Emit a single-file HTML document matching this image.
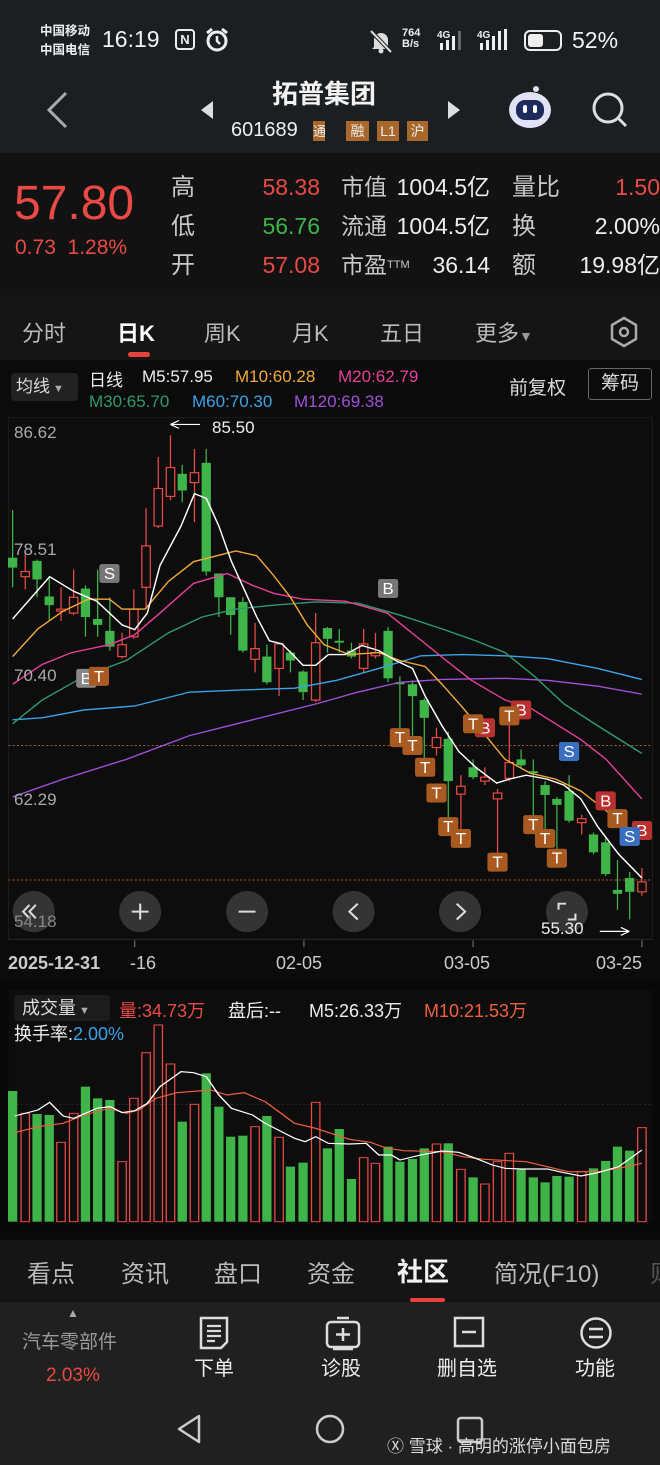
<!DOCTYPE html>
<html><head><meta charset="utf-8"><style>
*{margin:0;padding:0;box-sizing:border-box}
body{width:660px;height:1465px;background:#0b0b0b;font-family:"Liberation Sans","Noto Sans CJK SC",sans-serif;position:relative;overflow:hidden;color:#ddd}
.a{position:absolute;white-space:nowrap}
.r{color:#ea4a45}.g{color:#3fb449}
</style></head><body>
<!-- header bg -->
<div class="a" style="left:0;top:0;width:660px;height:153px;background:#1c1f22"></div>
<div class="a" style="left:0;top:153px;width:660px;height:142px;background:#121212"></div>
<div class="a" style="left:0;top:295px;width:660px;height:65px;background:#151515"></div>
<!-- status -->
<div class="a" style="left:40px;top:22px;font-size:12.5px;font-weight:bold;color:#eee;line-height:19px">中国移动<br>中国电信</div>
<div class="a" style="left:102px;top:26px;font-size:23px;color:#f2f2f2">16:19</div>
<div class="a" style="left:175px;top:29px;width:20px;height:21px;border:2px solid #eee;border-radius:4px;font-size:13px;font-weight:bold;text-align:center;line-height:17px;color:#eee">N</div>
<svg class="a" style="left:204px;top:27px" width="26" height="26"><circle cx="13" cy="14" r="9" stroke="#eee" stroke-width="3" fill="none"/><path d="M13 9 V14 L16 17" stroke="#eee" stroke-width="2.5" fill="none"/><path d="M3 6 L8 2 M23 6 L18 2" stroke="#eee" stroke-width="3"/></svg>
<svg class="a" style="left:368px;top:28px" width="26" height="26"><path d="M6 19 V12 A7 7 0 0 1 20 12 V19 L22 21 H4Z" fill="#ddd"/><circle cx="13" cy="23" r="2.5" fill="#ddd"/><path d="M3 3 L23 24" stroke="#1c1f22" stroke-width="4"/><path d="M3 3 L23 24" stroke="#ddd" stroke-width="2"/></svg>
<div class="a" style="left:402px;top:28px;font-size:11px;font-weight:bold;line-height:11px;color:#eee">764<br>B/s</div>
<svg class="a" style="left:437px;top:28px" width="36" height="24"><text x="0" y="10" font-size="10" font-weight="bold" fill="#eee" font-family="Liberation Sans">4G</text><rect x="3" y="15" width="3" height="7" fill="#eee"/><rect x="9" y="12" width="3" height="10" fill="#eee"/><rect x="15" y="8" width="3" height="14" fill="#eee"/><rect x="21" y="3" width="3" height="19" fill="#666"/></svg>
<svg class="a" style="left:477px;top:28px" width="36" height="24"><text x="0" y="10" font-size="10" font-weight="bold" fill="#eee" font-family="Liberation Sans">4G</text><rect x="3" y="15" width="3" height="7" fill="#eee"/><rect x="9" y="12" width="3" height="10" fill="#eee"/><rect x="15" y="8" width="3" height="14" fill="#eee"/><rect x="21" y="3" width="3" height="19" fill="#eee"/><rect x="27" y="1" width="3" height="21" fill="#eee"/></svg>
<div class="a" style="left:524px;top:30px;width:38px;height:21px;border:2px solid #eee;border-radius:6px"><div style="margin:2px;width:15px;height:13px;background:#eee;border-radius:3px"></div></div>
<div class="a" style="left:572px;top:27px;font-size:23px;color:#f2f2f2">52%</div>
<!-- nav header -->
<svg class="a" style="left:44px;top:90px" width="26" height="40"><path d="M22 3 L5 20 L22 37" stroke="#aaa" stroke-width="3" fill="none"/></svg>
<svg class="a" style="left:199px;top:99px" width="16" height="22"><path d="M14 2 L2 11 L14 20Z" fill="#ddd"/></svg>
<svg class="a" style="left:446px;top:99px" width="16" height="22"><path d="M2 2 L14 11 L2 20Z" fill="#ddd"/></svg>
<div class="a" style="left:272px;top:74px;font-size:26px;font-weight:bold;color:#f2f2f2">拓普集团</div>
<div class="a" style="left:231px;top:119px;font-size:20px;color:#eee">601689</div>
<div class="a" style="left:313px;top:121px;width:12px;height:20px;background:#a8682c;font-size:13px;color:#eee;overflow:hidden">通</div>
<div class="a" style="left:346px;top:121px;width:23px;height:20px;background:#a8682c;font-size:14px;color:#eee;text-align:center;line-height:20px">融</div>
<div class="a" style="left:377px;top:121px;width:22px;height:20px;background:#a8682c;font-size:14px;color:#eee;text-align:center;line-height:20px">L1</div>
<div class="a" style="left:407px;top:121px;width:21px;height:20px;background:#a8682c;font-size:14px;color:#eee;text-align:center;line-height:20px;overflow:hidden">沪</div>
<svg class="a" style="left:505px;top:84px" width="52" height="48"><ellipse cx="25" cy="26" rx="21" ry="18" fill="#dfe3f5"/><rect x="11" y="16" width="28" height="20" rx="9" fill="#1d2a5c"/><rect x="18" y="21" width="4" height="8" rx="2" fill="#fff"/><rect x="28" y="21" width="4" height="8" rx="2" fill="#fff"/><circle cx="31" cy="5" r="3" fill="#dfe3f5"/></svg>
<svg class="a" style="left:590px;top:90px" width="40" height="40"><circle cx="18" cy="18" r="14" stroke="#ddd" stroke-width="3" fill="none"/><path d="M28 28 L36 36" stroke="#ddd" stroke-width="3"/></svg>
<!-- price block -->
<div class="a r" style="left:14px;top:178px;font-size:48px;line-height:52px">57.80</div>
<div class="a r" style="left:15px;top:236px;font-size:21px">0.73&nbsp;&nbsp;1.28%</div>
<div class="a" style="left:171px;top:168px;font-size:24px;line-height:39px;color:#c8c8c8">高<br>低<br>开</div>
<div class="a" style="left:240px;top:168px;width:80px;text-align:right;font-size:23px;line-height:39px"><span class="r">58.38</span><br><span class="g">56.76</span><br><span class="r">57.08</span></div>
<div class="a" style="left:341px;top:168px;font-size:23px;line-height:39px;color:#c8c8c8">市值<br>流通<br>市盈<span style="font-size:11px;vertical-align:top">TTM</span></div>
<div class="a" style="left:380px;top:168px;width:110px;text-align:right;font-size:23px;line-height:39px;color:#eee">1004.5亿<br>1004.5亿<br>36.14</div>
<div class="a" style="left:512px;top:168px;font-size:24px;line-height:39px;color:#c8c8c8">量比<br>换<br>额</div>
<div class="a" style="left:540px;top:168px;width:120px;text-align:right;font-size:23px;line-height:39px;color:#eee"><span class="r">1.50</span><br>2.00%<br>19.98亿</div>
<!-- tabs -->
<div class="a" style="left:22px;top:316px;font-size:22px;color:#bbb">分时</div>
<div class="a" style="left:117px;top:316px;font-size:22px;color:#fff;font-weight:bold">日K</div>
<div class="a" style="left:204px;top:316px;font-size:22px;color:#bbb">周K</div>
<div class="a" style="left:292px;top:316px;font-size:22px;color:#bbb">月K</div>
<div class="a" style="left:380px;top:316px;font-size:22px;color:#bbb">五日</div>
<div class="a" style="left:475px;top:316px;font-size:22px;color:#bbb">更多<span style="font-size:14px;color:#999">▼</span></div>
<svg class="a" style="left:608px;top:316px" width="32" height="32"><path d="M16 2 L28 9 L28 23 L16 30 L4 23 L4 9Z" stroke="#aaa" stroke-width="2.5" fill="none"/><circle cx="16" cy="16" r="4" stroke="#aaa" stroke-width="2.5" fill="none"/></svg>
<div class="a" style="left:128px;top:352px;width:22px;height:5px;border-radius:3px;background:#e8423c"></div>
<!-- chart header -->
<div class="a" style="left:11px;top:373px;width:67px;height:28px;background:#222;border-radius:4px;font-size:17px;color:#ddd;line-height:28px;padding-left:5px">均线<span style="font-size:11px;color:#aaa"> ▼</span></div>
<div class="a" style="left:89px;top:366px;font-size:17px;color:#eee">日线</div>
<div class="a" style="left:142px;top:367px;font-size:17px;color:#eee">M5:57.95</div>
<div class="a" style="left:235px;top:367px;font-size:17px;color:#f2a83a">M10:60.28</div>
<div class="a" style="left:338px;top:367px;font-size:17px;color:#e6409a">M20:62.79</div>
<div class="a" style="left:89px;top:392px;font-size:17px;color:#2f9a6c">M30:65.70</div>
<div class="a" style="left:192px;top:392px;font-size:17px;color:#3ca3e8">M60:70.30</div>
<div class="a" style="left:294px;top:392px;font-size:17px;color:#a050d8">M120:69.38</div>
<div class="a" style="left:509px;top:373px;font-size:19px;color:#ddd">前复权</div>
<div class="a" style="left:588px;top:368px;width:64px;height:32px;border:1px solid #666;border-radius:3px;font-size:19px;color:#ddd;text-align:center;line-height:30px">筹码</div>
<!-- chart svg -->
<svg class="a" style="left:0;top:360px" width="660" height="620" viewBox="0 0 1568 1568" preserveAspectRatio="none">
<rect x="20" y="145" width="1530" height="1320" fill="#0d0d0d" stroke="#1e1e1e" stroke-width="2"/>
<line x1="20" y1="975" x2="1550" y2="975" stroke="#c8783a" stroke-width="2" stroke-dasharray="5,5"/>
<line x1="20" y1="1315" x2="1550" y2="1315" stroke="#c8783a" stroke-width="2" stroke-dasharray="5,5"/>
<g id="candles"></g>
<g fill="none" stroke-width="3.5">
<polyline stroke="#3ca3e8" points="30,910 100,905 200,885 320,875 450,840 560,835 700,830 800,810 900,780 1000,748 1100,745 1200,748 1300,755 1420,780 1525,808"/>
<polyline stroke="#a050d8" points="30,1105 150,1060 300,1010 450,950 600,910 750,870 850,840 950,815 1050,808 1200,805 1300,810 1420,825 1525,845"/>
<polyline stroke="#2f9a6c" points="30,920 100,860 200,800 300,760 400,690 480,650 560,630 650,620 750,612 850,615 950,645 1050,680 1130,710 1200,740 1270,800 1340,870 1420,925 1525,995"/>
<polyline stroke="#e6409a" points="30,820 100,770 170,740 260,720 320,695 380,640 460,565 540,540 600,570 650,590 720,605 820,610 920,640 990,700 1060,760 1120,810 1200,860 1260,880 1320,920 1380,960 1440,1010 1525,1110"/>
<polyline stroke="#f2a83a" points="30,750 90,680 150,635 210,605 260,605 290,630 345,630 400,560 460,510 560,483 610,495 650,545 690,600 730,670 770,720 830,745 900,740 950,760 1010,775 1050,820 1100,880 1150,945 1200,1010 1260,1045 1320,1060 1380,1090 1440,1140 1525,1210"/>
<polyline stroke="#fff" points="30,655 118,548 175,585 230,610 290,670 320,682 350,640 380,520 430,420 462,338 490,350 520,420 550,510 580,580 610,650 640,710 670,718 700,750 720,772 750,772 780,745 820,745 860,722 900,735 940,760 980,780 1010,850 1050,925 1090,990 1130,1030 1180,1070 1210,1060 1250,1050 1300,1060 1340,1075 1380,1110 1420,1180 1470,1250 1525,1310"/>
</g>
<g id="marks" font-family="Liberation Sans" font-size="40" text-anchor="middle"></g>
<g fill="#555" fill-opacity="0.55">
<ellipse cx="80" cy="1395" rx="50" ry="52"/><ellipse cx="333" cy="1395" rx="50" ry="52"/><ellipse cx="587" cy="1395" rx="50" ry="52"/><ellipse cx="840" cy="1395" rx="50" ry="52"/><ellipse cx="1093" cy="1395" rx="50" ry="52"/><ellipse cx="1347" cy="1395" rx="50" ry="52"/>
</g>
<g stroke="#ddd" stroke-width="5" fill="none">
<path d="M70 1378 L55 1395 L70 1412 M85 1378 L70 1395 L85 1412"/>
<path d="M313 1395 H353 M333 1375 V1415"/>
<path d="M567 1395 H607"/>
<path d="M850 1375 L830 1395 L850 1415"/>
<path d="M1085 1375 L1105 1395 L1085 1415"/>
<path d="M1327 1390 V1375 H1345 M1367 1400 V1415 H1349"/>
</g>
<path d="M405 163 H475 M405 163 L425 153 M405 163 L425 173" stroke="#fff" stroke-width="3" fill="none"/>
<path d="M1425 1445 H1495 M1495 1445 L1475 1435 M1495 1445 L1475 1455" stroke="#fff" stroke-width="3" fill="none"/>
<line x1="20" y1="1465" x2="1550" y2="1465" stroke="#333" stroke-width="2"/>
<g stroke="#666" stroke-width="3"><line x1="320" y1="1468" x2="320" y2="1485"/><line x1="722" y1="1468" x2="722" y2="1485"/><line x1="1124" y1="1468" x2="1124" y2="1485"/><line x1="1525" y1="1468" x2="1525" y2="1485"/></g>
</svg>
<div class="a" style="left:14px;top:423px;font-size:17px;color:#aaa">86.62</div>
<div class="a" style="left:14px;top:540px;font-size:17px;color:#aaa">78.51</div>
<div class="a" style="left:14px;top:666px;font-size:17px;color:#aaa">70.40</div>
<div class="a" style="left:14px;top:790px;font-size:17px;color:#aaa">62.29</div>
<div class="a" style="left:14px;top:912px;font-size:17px;color:#888">54.18</div>
<div class="a" style="left:212px;top:418px;font-size:17px;color:#eee">85.50</div>
<div class="a" style="left:541px;top:919px;font-size:17px;color:#eee">55.30</div>
<div class="a" style="left:8px;top:953px;font-size:18px;color:#ccc;font-weight:bold">2025-12-31</div>
<div class="a" style="left:130px;top:953px;font-size:18px;color:#ccc">-16</div>
<div class="a" style="left:276px;top:953px;font-size:18px;color:#ccc">02-05</div>
<div class="a" style="left:444px;top:953px;font-size:18px;color:#ccc">03-05</div>
<div class="a" style="left:596px;top:953px;font-size:18px;color:#ccc">03-25</div>
<!-- volume -->
<svg class="a" style="left:0;top:980px" width="660" height="260" viewBox="0 0 1568 780" preserveAspectRatio="none">
<rect x="0" y="0" width="1568" height="760" fill="#080808"/>
<rect x="20" y="30" width="1530" height="697" fill="#0d0d0d"/>
<line x1="20" y1="373" x2="1550" y2="373" stroke="#333" stroke-width="2" stroke-dasharray="5,5"/>
<g id="vol"></g>
<polyline fill="none" stroke="#f06040" stroke-width="3.5" points="35,458 90,440 150,430 200,405 260,385 300,400 330,390 370,355 420,338 500,330 540,345 580,338 630,365 700,430 750,445 830,478 880,487 920,505 960,512 1050,515 1100,530 1150,538 1250,545 1300,560 1350,575 1420,575 1470,565 1525,550"/>
<polyline fill="none" stroke="#fff" stroke-width="3.5" points="35,408 90,390 118,367 150,408 175,415 230,385 262,380 290,398 320,392 350,370 380,320 430,275 460,278 490,290 520,345 550,385 600,405 630,430 700,475 725,485 750,470 780,490 830,492 870,490 900,525 930,525 950,540 1000,525 1050,513 1090,517 1130,535 1170,555 1200,565 1240,567 1300,567 1340,578 1380,588 1420,578 1470,560 1525,510"/>
</svg>
<div class="a" style="left:14px;top:995px;width:96px;height:26px;background:#1c1c1c;border-radius:3px;font-size:18px;color:#ddd;padding-left:8px;line-height:26px">成交量<span style="font-size:11px;color:#aaa"> ▼</span></div>
<div class="a" style="left:119px;top:997px;font-size:18px;color:#ea4a45">量:34.73万</div>
<div class="a" style="left:228px;top:997px;font-size:18px;color:#eee">盘后:--</div>
<div class="a" style="left:309px;top:997px;font-size:18px;color:#eee">M5:26.33万</div>
<div class="a" style="left:424px;top:997px;font-size:18px;color:#f06040">M10:21.53万</div>
<div class="a" style="left:14px;top:1020px;font-size:18px;color:#eee">换手率:<span style="color:#3ca3e8">2.00%</span></div>
<!-- bottom tabs -->
<div class="a" style="left:0;top:1240px;width:660px;height:62px;background:#151515"></div>
<div class="a" style="left:27px;top:1254px;font-size:24px;color:#bbb">看点</div>
<div class="a" style="left:121px;top:1254px;font-size:24px;color:#bbb">资讯</div>
<div class="a" style="left:214px;top:1254px;font-size:24px;color:#bbb">盘口</div>
<div class="a" style="left:307px;top:1254px;font-size:24px;color:#bbb">资金</div>
<div class="a" style="left:397px;top:1252px;font-size:26px;color:#f2f2f2;font-weight:bold">社区</div>
<div class="a" style="left:494px;top:1254px;font-size:24px;color:#bbb">简况(F10)</div>
<div class="a" style="left:650px;top:1254px;font-size:24px;color:#555">则</div>
<div class="a" style="left:410px;top:1298px;width:35px;height:4px;background:#e8423c;border-radius:2px"></div>
<div class="a" style="left:0;top:1302px;width:660px;height:163px;background:#202020"></div>
<div class="a" style="left:67px;top:1306px;font-size:12px;color:#aaa">▲</div>
<div class="a" style="left:22px;top:1327px;font-size:19px;color:#9a9a9a">汽车零部件</div>
<div class="a" style="left:46px;top:1365px;font-size:19px;color:#ea4a45">2.03%</div>
<svg class="a" style="left:198px;top:1315px" width="34" height="36"><path d="M3 3 H29 V27 L23 33 H3Z" stroke="#ddd" stroke-width="2.5" fill="none"/><path d="M9 11 H23 M9 16 H23 M9 21 H23 M9 26 H17" stroke="#ddd" stroke-width="2.2"/></svg>
<div class="a" style="left:194px;top:1352px;font-size:20px;color:#eee">下单</div>
<svg class="a" style="left:324px;top:1316px" width="38" height="36"><rect x="3" y="6" width="32" height="25" rx="4" stroke="#ddd" stroke-width="2.5" fill="none"/><path d="M13 2 H25 M19 12 V25 M12 18.5 H26 M9 33 H29" stroke="#ddd" stroke-width="2.5"/></svg>
<div class="a" style="left:321px;top:1352px;font-size:20px;color:#eee">诊股</div>
<svg class="a" style="left:453px;top:1316px" width="32" height="34"><rect x="2" y="2" width="28" height="28" stroke="#ddd" stroke-width="2.5" fill="none"/><path d="M9 16 H23" stroke="#ddd" stroke-width="2.5"/></svg>
<div class="a" style="left:437px;top:1352px;font-size:20px;color:#eee">删自选</div>
<svg class="a" style="left:579px;top:1316px" width="34" height="34"><circle cx="17" cy="17" r="14.5" stroke="#ddd" stroke-width="2.5" fill="none"/><path d="M10 13 H24 M10 21 H24" stroke="#ddd" stroke-width="2.5"/></svg>
<div class="a" style="left:575px;top:1352px;font-size:20px;color:#eee">功能</div>
<svg class="a" style="left:175px;top:1413px" width="30" height="32"><path d="M24 3 L4 16 L24 29Z" stroke="#ccc" stroke-width="2.5" fill="none" stroke-linejoin="round"/></svg>
<svg class="a" style="left:314px;top:1413px" width="32" height="32"><circle cx="16" cy="16" r="13" stroke="#ccc" stroke-width="2.5" fill="none"/></svg>
<svg class="a" style="left:455px;top:1415px" width="30" height="30"><rect x="3" y="3" width="24" height="24" rx="3" stroke="#ccc" stroke-width="2.5" fill="none"/></svg>
<div class="a" style="left:387px;top:1432px;font-size:17px;color:#ddd">Ⓧ 雪球 · 高明的涨停小面包房</div>
<script>
var C=[[30,'g',500,525,380,575],[60,'r',535,548,490,580],[88,'g',508,555,505,600],[117,'g',598,620,550,660],[145,'r',630,635,575,660],[175,'r',600,640,530,645],[203,'g',578,650,570,700],[232,'g',655,670,530,700],[261,'g',685,725,600,735],[290,'r',720,750,690,755],[318,'r',630,700,580,705],[347,'r',470,575,375,630],[376,'r',325,420,245,425],[405,'r',272,345,190,355],[433,'g',288,330,265,360],[462,'r',285,310,225,410],[490,'g',260,535,225,545],[520,'g',540,600,540,650],[548,'g',600,645,600,695],[577,'g',612,735,600,740],[606,'r',730,757,665,790],[634,'g',750,815,720,820],[663,'r',718,780,718,850],[690,'g',740,760,735,790],[720,'g',788,840,785,860],[750,'r',715,860,640,865],[778,'g',678,705,675,740],[806,'g',710,715,680,740],[835,'g',735,750,715,755],[864,'r',718,780,680,790],[892,'r',740,748,690,755],[922,'g',685,805,675,815],[950,'g',815,820,800,940],[980,'g',820,850,810,970],[1008,'g',860,905,855,1030],[1037,'r',955,980,930,1000],[1065,'g',958,1065,940,1180],[1095,'r',1078,1098,1050,1200],[1124,'g',1030,1055,1010,1060],[1152,'r',1055,1065,1030,1075],[1182,'r',1095,1110,1085,1250],[1210,'r',1018,1058,920,1065],[1238,'g',1010,1025,985,1030],[1267,'g',1040,1045,1010,1160],[1295,'g',1075,1100,1065,1205],[1323,'g',1110,1125,1105,1240],[1352,'g',1090,1165,1050,1170],[1382,'r',1160,1170,1150,1200],[1410,'g',1200,1245,1195,1250],[1439,'g',1220,1300,1210,1305],[1467,'g',1340,1350,1265,1390],[1496,'g',1310,1345,1295,1415],[1525,'r',1320,1345,1285,1355]];
var s='';
C.forEach(function(c){var col=c[1]=='g'?'#3fb449':'#ea4a45';var x=c[0],t=c[2],b=Math.max(c[3],c[2]+5);
s+='<line x1="'+x+'" y1="'+c[4]+'" x2="'+x+'" y2="'+c[5]+'" stroke="'+col+'" stroke-width="3"/>';
if(c[1]=='g')s+='<rect x="'+(x-11)+'" y="'+t+'" width="22" height="'+(b-t)+'" fill="'+col+'"/>';
else s+='<rect x="'+(x-10)+'" y="'+t+'" width="20" height="'+(b-t)+'" fill="#0d0d0d" stroke="'+col+'" stroke-width="3"/>';});
document.getElementById('candles').innerHTML=s;
var M=[[260,540,'S','#777'],[922,578,'B','#777'],[205,805,'B','#888'],[235,800,'T','#a85a20'],[950,955,'T','#a85a20'],[980,975,'T','#a85a20'],[1010,1030,'T','#a85a20'],[1037,1095,'T','#a85a20'],[1065,1180,'T','#a85a20'],[1095,1210,'T','#a85a20'],[1152,930,'B','#b83030'],[1124,920,'T','#a85a20'],[1238,885,'B','#b83030'],[1210,900,'T','#a85a20'],[1182,1270,'T','#a85a20'],[1267,1175,'T','#a85a20'],[1295,1210,'T','#a85a20'],[1323,1260,'T','#a85a20'],[1439,1115,'B','#b83030'],[1467,1160,'T','#a85a20'],[1352,990,'S','#3a6fc0'],[1525,1190,'B','#b83030'],[1496,1205,'S','#3a6fc0']];
var m='';M.forEach(function(k){m+='<rect x="'+(k[0]-24)+'" y="'+(k[1]-24)+'" width="48" height="48" rx="6" fill="'+k[3]+'"/><text x="'+k[0]+'" y="'+(k[1]+14)+'" fill="#fff">'+k[2]+'</text>';});
document.getElementById('marks').innerHTML=m;
var V=[[30,'g',333],[60,'r',400],[88,'g',402],[117,'g',405],[145,'r',487],[175,'r',400],[203,'g',320],[232,'g',355],[261,'g',360],[290,'r',545],[318,'r',355],[347,'r',218],[376,'r',135],[405,'r',252],[433,'g',425],[462,'r',373],[490,'g',280],[520,'g',380],[548,'g',470],[577,'g',467],[606,'r',440],[634,'g',408],[663,'r',472],[690,'g',560],[720,'g',548],[750,'r',367],[778,'g',505],[806,'g',447],[835,'g',597],[864,'r',533],[892,'r',550],[922,'g',500],[950,'g',545],[980,'g',537],[1008,'g',505],[1037,'r',492],[1065,'g',490],[1095,'r',568],[1124,'g',592],[1152,'r',612],[1182,'r',545],[1210,'r',520],[1238,'g',568],[1267,'g',592],[1295,'g',607],[1323,'g',588],[1352,'g',590],[1382,'r',575],[1410,'g',565],[1439,'g',543],[1467,'g',500],[1496,'g',512],[1525,'r',443]];
var v='';V.forEach(function(k){if(k[1]=='g')v+='<rect x="'+(k[0]-11)+'" y="'+k[2]+'" width="22" height="'+(725-k[2])+'" fill="#3fb449"/>';else v+='<rect x="'+(k[0]-10)+'" y="'+k[2]+'" width="20" height="'+(725-k[2])+'" fill="none" stroke="#ea4a45" stroke-width="3"/>';});
document.getElementById('vol').innerHTML=v;
</script>
</body></html>
